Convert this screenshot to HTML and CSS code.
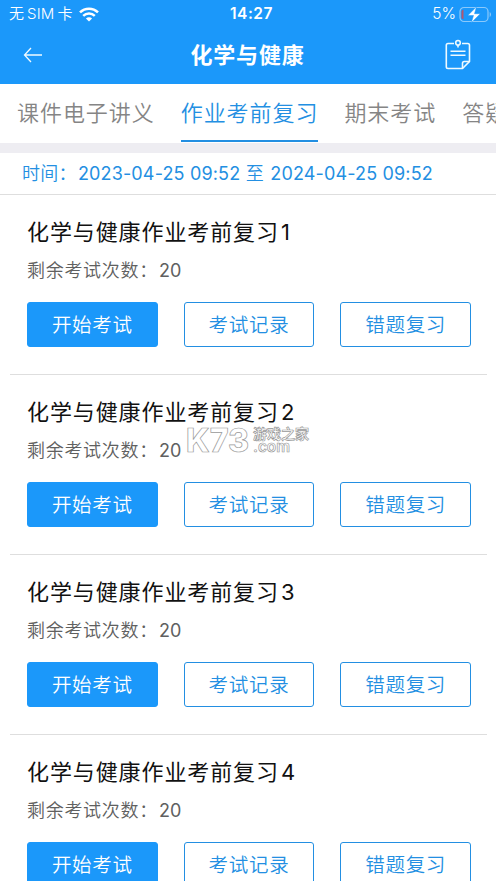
FILE: index.html
```
<!DOCTYPE html>
<html lang="zh-CN">
<head>
<meta charset="utf-8">
<title>化学与健康</title>
<link rel="stylesheet" href="styles.css">
</head>
<body>
<div class="app">
  <header class="header">
    <div class="status">
      <div class="carrier"><span class="carrier-name">无<span class="sim">SIM</span>卡</span>
        <svg class="wifi" width="20" height="15" viewBox="0 0 20 15"><g fill="none" stroke="#fff" stroke-width="2.5"><path d="M1 5.4C6 .4 14 .4 19 5.4"/><path d="M4.2 8.8c3.2-3.1 8.400-3.100 11.600 0"/></g><path d="M10 14.500l-3.100-3.100c1.700-1.600 4.500-1.600 6.200 0z" fill="#fff"/></svg>
      </div>
      <div class="clock">14:27</div>
      <div class="power"><span>5%</span>
        <svg width="33" height="17" viewBox="0 0 33 17"><rect x="1" y="1.500" width="28" height="14" rx="4" fill="none" stroke="#8bc9fb" stroke-width="1.200"/><path d="M30.700 6v5c1.700-.7 1.700-4.300 0-5z" fill="#8bc9fb"/><path d="M2.500 5.500q0-1.700 2-1.700v9.500Q2.500 13.300 2.500 11.500z" fill="#b4566f"/><path d="M17.500 .8L8.800 9.500h5.700l-2.200 7.200 9-9h-5.800z" fill="#fff" stroke="#1b98fa" stroke-width=".5"/></svg>
      </div>
    </div>
    <div class="nav">
      <svg class="back" width="20" height="18" viewBox="0 0 20 18"><path d="M8 2L1.500 9 8 16M1.500 9H19" fill="none" stroke="#f0faff" stroke-width="1.300"/></svg>
      <h1>化学与健康</h1>
      <svg class="note" width="28" height="32" viewBox="0 0 28 32" fill="none" stroke="#effaff" stroke-width="1.600" stroke-linejoin="round"><path d="M10 4.500H4q-1.700 0-1.700 1.700v21.600q0 1.700 1.700 1.700h14.500l7-7V6.200q0-1.700-1.700-1.700H18"/><path d="M18.500 29.500v-5.300q0-1.700 1.700-1.700h5.300"/><circle cx="14" cy="3.800" r="2.300"/><path d="M14 6v2.500M6.500 12.300h15M6.500 16.300h15"/></svg>
    </div>
  </header>
  <nav class="tabs">
    <a class="tab">课件电子讲义</a>
    <a class="tab active">作业考前复习</a>
    <a class="tab">期末考试</a>
    <a class="tab">答疑</a>
  </nav>
  <div class="period">时间：<span class="date">2023-04-25 09:52</span> 至 <span class="date">2024-04-25 09:52</span></div>
  <main>
    <section class="exam">
      <h2>化学与健康作业考前复习<span>1</span></h2>
      <p>剩余考试次数：<span>20</span></p>
      <div class="actions"><button class="primary">开始考试</button><button>考试记录</button><button>错题复习</button></div>
    </section>
    <section class="exam">
      <h2>化学与健康作业考前复习<span>2</span></h2>
      <p>剩余考试次数：<span>20</span></p>
      <div class="actions"><button class="primary">开始考试</button><button>考试记录</button><button>错题复习</button></div>
    </section>
    <section class="exam">
      <h2>化学与健康作业考前复习<span>3</span></h2>
      <p>剩余考试次数：<span>20</span></p>
      <div class="actions"><button class="primary">开始考试</button><button>考试记录</button><button>错题复习</button></div>
    </section>
    <section class="exam">
      <h2>化学与健康作业考前复习<span>4</span></h2>
      <p>剩余考试次数：<span>20</span></p>
      <div class="actions"><button class="primary">开始考试</button><button>考试记录</button><button>错题复习</button></div>
    </section>
  </main>
  <svg class="watermark" width="134" height="50" viewBox="0 0 134 50">
    <text class="wm-logo" x="2" y="37" textLength="63" lengthAdjust="spacingAndGlyphs">K73</text>
    <text class="wm-cn" x="69" y="24" textLength="56">游戏之家</text>
    <text class="wm-com" x="69" y="37" textLength="37" lengthAdjust="spacingAndGlyphs">.com</text>
  </svg>
</div>
</body>
</html>
```
FILE: styles.css
```
* { box-sizing: border-box; }
body {
  margin: 0;
  background: #fff;
  font-family: Inter, "Noto Sans CJK SC", sans-serif;
}
.app {
  position: relative;
  width: 496px;
  height: 881px;
  overflow: hidden;
}
.header {
  height: 84px;
  background: #1b98fa;
  color: #fff;
}
.status {
  display: grid;
  grid-template-columns: 1fr auto 1fr;
  align-items: center;
  height: 26px;
  padding: 0 2px 0 9px;
  font-size: 15px;
  font-weight: 350;
  line-height: 28px;
}
.carrier, .power { display: flex; align-items: center; }
.carrier { gap: 6px; }
.sim { margin: 0 3px; letter-spacing: 0.2px; }
.power { justify-content: flex-end; gap: 3px; margin-right: 2px; font-size: 15.5px; }
.clock { font-size: 15.5px; font-weight: 600; letter-spacing: 0.5px; }
.nav {
  display: grid;
  grid-template-columns: 1fr auto 1fr;
  align-items: center;
  height: 58px;
  padding: 0 24px 0 23px;
}
.nav h1 {
  margin: 0;
  font-size: 22px;
  font-weight: 600;
  line-height: 58px;
  letter-spacing: 0.8px;
}
.note { justify-self: end; }
.tabs {
  display: flex;
  gap: 26px;
  height: 69px;
  padding-left: 17px;
  border-bottom: 10px solid #eeedf2;
  overflow: hidden;
}
.tab {
  flex: none;
  height: 58px;
  color: #858585;
  font-size: 22px;
  font-weight: 350;
  line-height: 58px;
  letter-spacing: 0.95px;
  white-space: nowrap;
}
.tab.active {
  color: #238fe2;
  border-bottom: 2.500px solid #238fe2;
}
.period {
  height: 41.500px;
  padding-left: 22px;
  border-bottom: 1px solid #dedede;
  color: #238fe2;
  font-size: 18px;
  font-weight: 350;
  line-height: 42px;
  letter-spacing: 0.3px;
  white-space: nowrap;
}
.date { margin-left: 1px; font-weight: 400; letter-spacing: 0.15px; }
.exam {
  height: 180.300px;
  margin: 0 9px 0 10px;
  padding: 20px 16px 0 17px;
  border-bottom: 1px solid #dedede;
}
.exam h2 {
  margin: 0;
  color: #111;
  font-size: 22px;
  font-weight: 400;
  line-height: 34px;
  letter-spacing: 0.9px;
}
.exam h2 span { margin-left: 2px; }
.exam p {
  margin: 7px 0 0;
  color: #606060;
  font-size: 18px;
  font-weight: 350;
  line-height: 30px;
  letter-spacing: 0.7px;
}
.exam p span { margin-left: 1px; font-weight: 400; letter-spacing: 0; }
.actions {
  display: grid;
  grid-template-columns: repeat(3, 1fr);
  gap: 26px;
  margin-top: 16px;
}
button {
  height: 45px;
  padding: 1px 0 0;
  border: 1.500px solid #238fe2;
  border-radius: 3px;
  background: #fff;
  color: #238fe2;
  font: 350 19.500px/42px Inter, "Noto Sans CJK SC", sans-serif;
  letter-spacing: 0.7px;
}
button.primary { border-color: #1b98fa; background: #1b98fa; color: #fff; }
.watermark {
  position: absolute;
  left: 184px;
  top: 415px;
}
.watermark text { fill: #fff; stroke: #999; stroke-width: 0.700px; }
.watermark .wm-logo { font: 800 32px Inter, sans-serif; }
.watermark .wm-cn { font: 700 14px "Noto Sans CJK SC", sans-serif; }
.watermark .wm-com { font: 600 16px Inter, sans-serif; }
```
